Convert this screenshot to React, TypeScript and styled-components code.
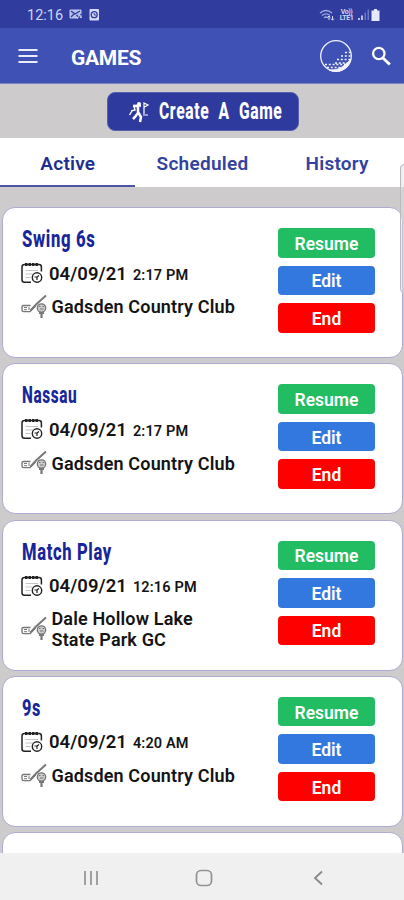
import React from "react";
import styled, { createGlobalStyle } from "styled-components";

const Global = createGlobalStyle`
  * { box-sizing: border-box; }
  body { margin: 0; background: #cdcbcc; font-family: Roboto, "Liberation Sans", sans-serif; }
  svg { flex: none; }
`;

const Screen = styled.div`
  position: relative;
  width: 404px;
  height: 900px;
  overflow: hidden;
  display: flex;
  flex-direction: column;
  background: #cdcbcc;
`;
const StatusBar = styled.div`
  height: 28px;
  flex: none;
  padding: 2px 22px 0 27px;
  display: flex;
  align-items: center;
  justify-content: space-between;
  background: #303d9f;
  color: #cfd4f3;
`;
const StatusGroup = styled.div`
  display: flex;
  align-items: center;
  gap: 4px;
`;
const Clock = styled.span`
  font-size: 14.5px;
  margin: 1px 2px 0 0;
`;
const Header = styled.header`
  height: 56px;
  flex: none;
  padding: 0 12px 0 18px;
  display: flex;
  align-items: center;
  background: #3f51b5;
  border-bottom: 1px solid #7d86c4;
`;
const Heading = styled.h1`
  margin: 4px auto 0 33px;
  font-size: 21px;
  font-weight: 700;
  letter-spacing: -0.3px;
  color: #fff;
`;
const HeaderActions = styled.div`
  display: flex;
  align-items: center;
  gap: 18px;
  margin-right: 1px;
  padding-top: 1px;
`;
const CreateArea = styled.div`
  height: 54px;
  flex: none;
  display: flex;
  justify-content: center;
  align-items: center;
  padding-left: 1px;
`;
const CreateButton = styled.button`
  width: 192px;
  height: 39px;
  border: 1px solid #5760ad;
  border-radius: 8px;
  background: #2f3a9f;
  color: #fff;
  padding: 2px 0 0 20px;
  display: flex;
  align-items: center;
  gap: 9px;
`;
const Display = styled.span<{ $scale: number; $words?: number }>`
  display: block;
  flex: none;
  white-space: pre;
  width: max-content;
  font-family: Roboto, sans-serif;
  font-weight: 800;
  font-size: 23px;
  line-height: 28px;
  letter-spacing: 0.9px;
  word-spacing: ${(p) => p.$words ?? 0}px;
  transform: scaleX(${(p) => p.$scale});
  transform-origin: left center;
`;
const Tabs = styled.nav`
  height: 49px;
  flex: none;
  display: grid;
  grid-template-columns: repeat(3, 1fr);
  background: #fff;
`;
const Tab = styled.div<{ $active?: boolean }>`
  display: flex;
  align-items: center;
  justify-content: center;
  padding: 3px 0 0 1px;
  font-size: 19px;
  font-weight: 600;
  letter-spacing: 0.25px;
  color: ${(p) => (p.$active ? "#202e91" : "#3342a0")};
  border-bottom: 2px solid ${(p) => (p.$active ? "#4b55a3" : "#fff")};
`;
const List = styled.main`
  flex: 1;
  min-height: 0;
  overflow: hidden;
  padding: 20px 1px 0 2px;
  display: flex;
  flex-direction: column;
  gap: 5.3px;
`;
const Card = styled.article`
  height: 151px;
  flex: none;
  display: flex;
  justify-content: space-between;
  padding: 20px 27px 0 18px;
  border: 1.5px solid #adabd0;
  border-radius: 13px;
  background: #fff;
`;
const Info = styled.div`
  display: flex;
  flex-direction: column;
  color: #141414;
`;
const Title = styled.div`
  height: 28px;
  color: #18269b;
  margin: -2px 0 6px 1px;
`;
const DateRow = styled.div`
  height: 26px;
  display: flex;
  align-items: center;
  gap: 6px;
`;
const DateText = styled.span`
  padding-top: 1px;
  font-size: 18.5px;
  font-weight: 600;
  letter-spacing: 0.05px;
`;
const Time = styled.small`
  font-size: 14.5px;
  letter-spacing: 0.15px;
  margin-left: 6px;
`;
const ClubRow = styled.div`
  min-height: 24px;
  margin-top: 8px;
  display: flex;
  align-items: center;
  gap: 4.5px;
`;
const Club = styled.span`
  padding-top: 1px;
  font-size: 18px;
  line-height: 21.5px;
  font-weight: 600;
  white-space: pre-line;
  letter-spacing: 0.15px;
`;
const Actions = styled.div`
  display: flex;
  flex-direction: column;
  gap: 8px;
`;
const Action = styled.button<{ $color: string }>`
  width: 97px;
  height: 29.5px;
  padding: 2px 0 0;
  border: 0;
  border-radius: 4px;
  background: ${(p) => p.$color};
  color: #fff;
  font: 600 17.5px Roboto, sans-serif;
`;
const SystemNav = styled.footer`
  height: 47px;
  flex: none;
  padding: 2px 29px 0 34px;
  display: grid;
  grid-template-columns: repeat(3, 1fr);
  place-items: center;
  background: #f0f0f0;
`;
const EdgeHandle = styled.div`
  position: absolute;
  right: -4px;
  top: 164px;
  width: 8px;
  height: 129px;
  border: 1px solid #b9b9c0;
  border-radius: 6px;
  background: #dedee280;
`;

const CalendarIcon = () => (
  <svg width="22" height="22" viewBox="0 0 22 22" fill="none" stroke="#222">
    <path d="M10 20.3H3.5Q1 20.3 1 17.8V5Q1 2.5 3.5 2.5H18Q20.4 2.5 20.4 5V9.5" strokeWidth="1.5" />
    <path d="M4 2.5H17.5" strokeWidth="3" strokeDasharray="2.5 1" />
    <path d="M4.5 8.5H17M4.5 12H12M4.5 15.5H9.5" stroke="#c4c4c4" />
    <circle cx="16" cy="15.5" r="4.7" strokeWidth="1.4" fill="#fff" />
    <path d="M13.5 15H16V18M16 15L18 13.5" strokeWidth="1.2" />
  </svg>
);

const ClubIcon = () => (
  <svg width="26" height="25" viewBox="0 0 26 25" fill="none" stroke="#777">
    <path d="M9.5 16.5L15 10.5L25 1.5" strokeWidth="1.9" />
    <path d="M9.5 11.5H2.5Q1 11.5 1 13.2V16Q1 17.6 2.8 17.6H9L14.5 12" strokeWidth="1.4" />
    <path d="M3 13.5H6M3 15.7H6M8 13V16" />
    <circle cx="20.5" cy="14" r="4.2" fill="#ccc" strokeWidth="1.3" />
    <path d="M18 12.5H19.5M21.5 12.5H23M19 15H22.5" />
    <path d="M18 19H23M20.5 18.5V24" strokeWidth="2.2" />
  </svg>
);

const MenuIcon = () => (
  <svg width="20" height="16" viewBox="0 0 20 16" stroke="#e9ebfa" strokeWidth="2.1">
    <path d="M0.5 2H19.5M0.5 8H19.5M0.5 14H19.5" />
  </svg>
);

const BallIcon = () => (
  <svg width="34" height="34" viewBox="0 0 34 34" fill="none" stroke="#f1f3ff">
    <circle cx="17" cy="17" r="15.3" strokeWidth="1.3" />
    <path d="M32 20A15.5 15.5 0 0 1 10 31Q18 31.5 23 28T32 20Z" fill="#f1f3ff" strokeWidth="0.8" />
    <path d="M26 13.5H31M22 17H32M18 20.5H31M16 24H29M6 25.5H27M8 28.5H23" strokeWidth="1.3" strokeDasharray="2 1.8" />
  </svg>
);

const SearchIcon = () => (
  <svg width="20" height="21" viewBox="0 0 20 21" fill="none" stroke="#fff">
    <circle cx="7.8" cy="7.5" r="5.7" strokeWidth="2.3" />
    <path d="M12 12L18.8 18.5" strokeWidth="2.9" />
  </svg>
);

const GolferIcon = () => (
  <svg width="22" height="22" viewBox="0 0 22 22" fill="none" stroke="#fff">
    <circle cx="11" cy="3" r="2" fill="#fff" stroke="none" />
    <path d="M5 5L13 4.5M10 6L10 12L7 16L5 18M10 11L13 16L12 21" strokeWidth="2.5" />
    <path d="M6 5L7 9L3 10M4 10L1.5 14" strokeWidth="1.4" />
    <path d="M16 13V2L20 4L16.5 6M15 14H20" strokeWidth="1.2" />
  </svg>
);

const NotificationIcons = () => (
  <svg width="31" height="14" viewBox="0 0 31 14" fill="none" stroke="#c5cbee">
    <path d="M1 2H12V10H1Z" fill="#b4bce8" strokeWidth="1" />
    <path d="M2 3L6 6L11 3M2 9L5 6M8 12L12.5 6M7.5 7L12.5 12" stroke="#303d9f" strokeWidth="1.3" />
    <path d="M8 11L11 7L12.5 10" />
    <rect x="20.5" y="1" width="9.5" height="11.5" rx="1" fill="#d5daf5" stroke="none" />
    <circle cx="25.2" cy="6.7" r="3" stroke="#303d9f" strokeWidth="1.3" />
    <path d="M25.2 5V7H27" stroke="#303d9f" />
  </svg>
);

const Volte = styled.span`
  width: 15px;
  font-size: 7px;
  line-height: 6.5px;
  font-weight: 700;
  letter-spacing: -0.5px;
  text-align: center;
`;
const WifiIcon = () => (
  <svg width="16" height="13" viewBox="0 0 16 13" fill="none" stroke="#a2acdf">
    <path d="M1 4Q7 -1 13 4M3 6.5Q7 3.3 11 6.5M5 8.8Q7 7.2 9 8.8" strokeWidth="1.3" />
    <path d="M10 11V7M8.7 8.5L10 7L11.3 8.5M13.5 7V11M12.2 9.7L13.5 11.2L14.8 9.7" stroke="#d4daf8" />
  </svg>
);
const SignalBattery = () => (
  <svg width="24" height="14" viewBox="1 0 24 14">
    <path d="M1 12V10H3V12ZM4 12V7.5H6V12Z" fill="#b6bfe9" />
    <path d="M7.5 12V4.5H9V12ZM10.5 12V1.5H12V12Z" fill="#6d79c2" />
    <path d="M14.5 2.5H17V1H20V2.5H22.5V13H14.5Z" fill="#e6e9fb" />
  </svg>
);

const games = [
  { name: "Swing 6s", scale: 0.725, time: "2:17 PM", club: "Gadsden Country Club" },
  { name: "Nassau", scale: 0.67, time: "2:17 PM", club: "Gadsden Country Club" },
  { name: "Match Play", scale: 0.72, time: "12:16 PM", club: "Dale Hollow Lake\nState Park GC" },
  { name: "9s", scale: 0.71, time: "4:20 AM", club: "Gadsden Country Club" },
];

export default function App() {
  return (
    <Screen>
      <Global />
      <StatusBar>
        <StatusGroup>
          <Clock>12:16</Clock>
          <NotificationIcons />
        </StatusGroup>
        <StatusGroup>
          <WifiIcon />
          <Volte>Vo))<br />LTE1</Volte>
          <SignalBattery />
        </StatusGroup>
      </StatusBar>
      <Header>
        <MenuIcon />
        <Heading>GAMES</Heading>
        <HeaderActions>
          <BallIcon />
          <SearchIcon />
        </HeaderActions>
      </Header>
      <CreateArea>
        <CreateButton>
          <GolferIcon />
          <Display $scale={0.68} $words={7}>Create A Game</Display>
        </CreateButton>
      </CreateArea>
      <Tabs>
        <Tab $active>Active</Tab>
        <Tab>Scheduled</Tab>
        <Tab>History</Tab>
      </Tabs>
      <List>
        {games.map((g) => (
          <Card key={g.name}>
            <Info>
              <Title><Display $scale={g.scale}>{g.name}</Display></Title>
              <DateRow>
                <CalendarIcon />
                <DateText>04/09/21<Time>{g.time}</Time></DateText>
              </DateRow>
              <ClubRow>
                <ClubIcon />
                <Club>{g.club}</Club>
              </ClubRow>
            </Info>
            <Actions>
              <Action $color="#22bd62">Resume</Action>
              <Action $color="#3278df">Edit</Action>
              <Action $color="#fe0000">End</Action>
            </Actions>
          </Card>
        ))}
        <Card />
      </List>
      <SystemNav>
        <svg width="18" height="18" viewBox="0 0 18 18" stroke="#929292" strokeWidth="1.7">
          <path d="M3 2V16M9 2V16M15 2V16" />
        </svg>
        <svg width="18" height="18" viewBox="0 0 18 18" fill="none" stroke="#929292" strokeWidth="1.7">
          <rect x="1.5" y="1.5" width="15" height="15" rx="4.5" />
        </svg>
        <svg width="18" height="18" viewBox="0 0 18 18" fill="none" stroke="#888" strokeWidth="1.8">
          <path d="M13 2.5L6 9L13 15.5" />
        </svg>
      </SystemNav>
      <EdgeHandle />
    </Screen>
  );
}
